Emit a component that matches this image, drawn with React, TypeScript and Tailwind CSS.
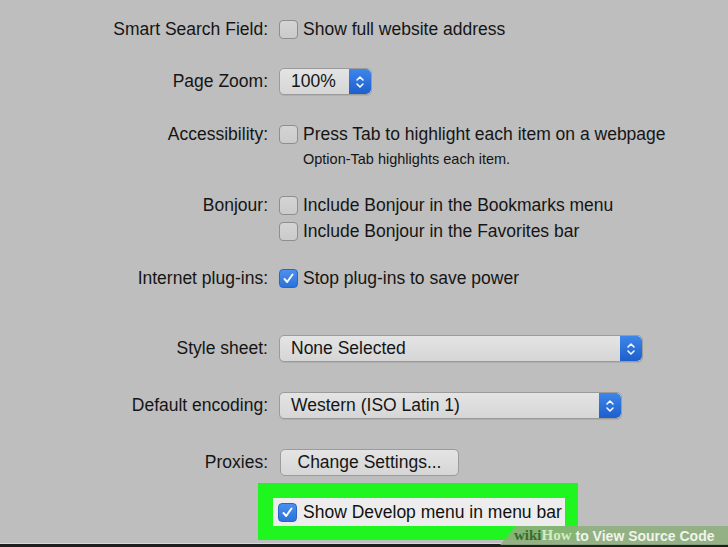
import React from 'react';

const font = { fontFamily: '"Liberation Sans", Arial, sans-serif' };

function Checkbox({ checked = false }: { checked?: boolean }) {
	if (checked) {
		return (
			<span className="inline-flex h-[19px] w-[19px] shrink-0 items-center justify-center rounded-[4px] border border-[#2a64c4] bg-gradient-to-b from-[#4b90ee] to-[#2a72dc]">
				<svg width="13" height="13" viewBox="0 0 13 13" fill="none">
					<path d="M2.5 7 L5.2 10 L10.5 2.5" stroke="white" strokeWidth="1.9" strokeLinecap="round" strokeLinejoin="round" />
				</svg>
			</span>
		);
	}
	return <span className="inline-block h-[19px] w-[19px] shrink-0 rounded-[4px] border border-[#8e8e8e] bg-gradient-to-b from-[#d4d4d4] to-[#cbcbcb]" />;
}

function Stepper() {
	return (
		<span className="flex h-full w-[22px] shrink-0 items-center justify-center rounded-r-[5px] bg-gradient-to-b from-[#3d86ea] to-[#1d5fcc]">
			<svg width="10" height="16" viewBox="0 0 10 16" fill="none">
				<path d="M2 6 L5 3 L8 6" stroke="white" strokeWidth="1.5" strokeLinecap="round" strokeLinejoin="round" />
				<path d="M2 10 L5 13 L8 10" stroke="white" strokeWidth="1.5" strokeLinecap="round" strokeLinejoin="round" />
			</svg>
		</span>
	);
}

function Popup({ value, width }: { value: string; width: string }) {
	return (
		<div className={`flex h-[27px] items-center overflow-hidden rounded-[5px] border border-[#9b9b9b] bg-gradient-to-b from-[#e4e4e4] to-[#d6d6d6] shadow-[0_1px_0_rgba(0,0,0,0.08)] ${width}`}>
			<span className="flex-1 pl-[11px] text-[17.5px] text-[#151515]">{value}</span>
			<Stepper />
		</div>
	);
}

function Row({ label, children, className = '' }: { label?: string; children: React.ReactNode; className?: string }) {
	return (
		<div className={`grid grid-cols-[268px_1fr] items-center gap-x-[11px] ${className}`}>
			<span className="text-right text-[17.5px] text-[#151515]">{label}</span>
			<div className="flex items-center">{children}</div>
		</div>
	);
}

function CheckItem({ checked, text }: { checked?: boolean; text: string }) {
	return (
		<div className="flex h-[26px] items-center gap-[5px]">
			<Checkbox checked={checked} />
			<span className="text-[17.5px] text-[#151515]">{text}</span>
		</div>
	);
}

export default function App() {
	return (
		<div className="relative h-[547px] w-[728px] overflow-hidden bg-[#bebebe]" style={font}>
			<div className="flex flex-col pt-[16px]">
				<Row className="h-[26px]" label="Smart Search Field:">
					<CheckItem text="Show full website address" />
				</Row>

				<Row className="mt-[26px] h-[27px]" label="Page Zoom:">
					<Popup value="100%" width="w-[93px]" />
				</Row>

				<Row className="mt-[26px] h-[26px]" label="Accessibility:">
					<CheckItem text="Press Tab to highlight each item on a webpage" />
				</Row>
				<div className="ml-[303px] mt-[3px] h-[18px] text-[14.5px] leading-[18px] text-[#151515]">Option-Tab highlights each item.</div>

				<Row className="mt-[24px] h-[26px]" label="Bonjour:">
					<CheckItem text="Include Bonjour in the Bookmarks menu" />
				</Row>
				<Row className="h-[26px]">
					<CheckItem text="Include Bonjour in the Favorites bar" />
				</Row>

				<Row className="mt-[21px] h-[26px]" label="Internet plug-ins:">
					<CheckItem checked text="Stop plug-ins to save power" />
				</Row>

				<Row className="mt-[44px] h-[27px]" label="Style sheet:">
					<Popup value="None Selected" width="w-[364px]" />
				</Row>

				<Row className="mt-[30px] h-[27px]" label="Default encoding:">
					<Popup value="Western (ISO Latin 1)" width="w-[343px]" />
				</Row>

				<Row className="mt-[30px] h-[27px]" label="Proxies:">
					<button className="ml-[1px] flex h-[27px] w-[179px] items-center justify-center rounded-[5px] border border-[#9b9b9b] bg-gradient-to-b from-[#e4e4e4] to-[#d6d6d6] text-[17.5px] text-[#151515]">
						Change Settings...
					</button>
				</Row>

				<div className="ml-[258px] mt-[7px] h-[57px] w-[320px] bg-[#1ff51f] pl-[15px] pt-[15px]">
					<div className="flex h-[28px] w-[292px] items-center gap-[6px] bg-[#ededed] pl-[5px]">
						<Checkbox checked />
						<span className="text-[17.5px] text-[#111]">Show Develop menu in menu bar</span>
					</div>
				</div>
			</div>

			<div className="absolute bottom-0 left-0 right-0 h-[4px] border-t border-[#d8d8d8] bg-[#1e1e1e]" />

			<div className="absolute bottom-[2px] right-0 flex h-[19px] w-[228px] items-center whitespace-nowrap bg-[#8fae7e]/90 pl-[14px] [clip-path:polygon(7%_0,100%_0,100%_100%,0_100%)]">
				<span className="text-[15px] font-bold leading-none text-[#3c6a2c]" style={{ fontFamily: '"Liberation Serif", serif' }}>wiki</span>
				<span className="text-[15px] font-bold leading-none text-[#d4ecc6]" style={{ fontFamily: '"Liberation Serif", serif' }}>How</span>
				<span className="ml-[4px] text-[14px] font-bold leading-none text-[#eef5ea]">to View Source Code</span>
			</div>
		</div>
	);
}
